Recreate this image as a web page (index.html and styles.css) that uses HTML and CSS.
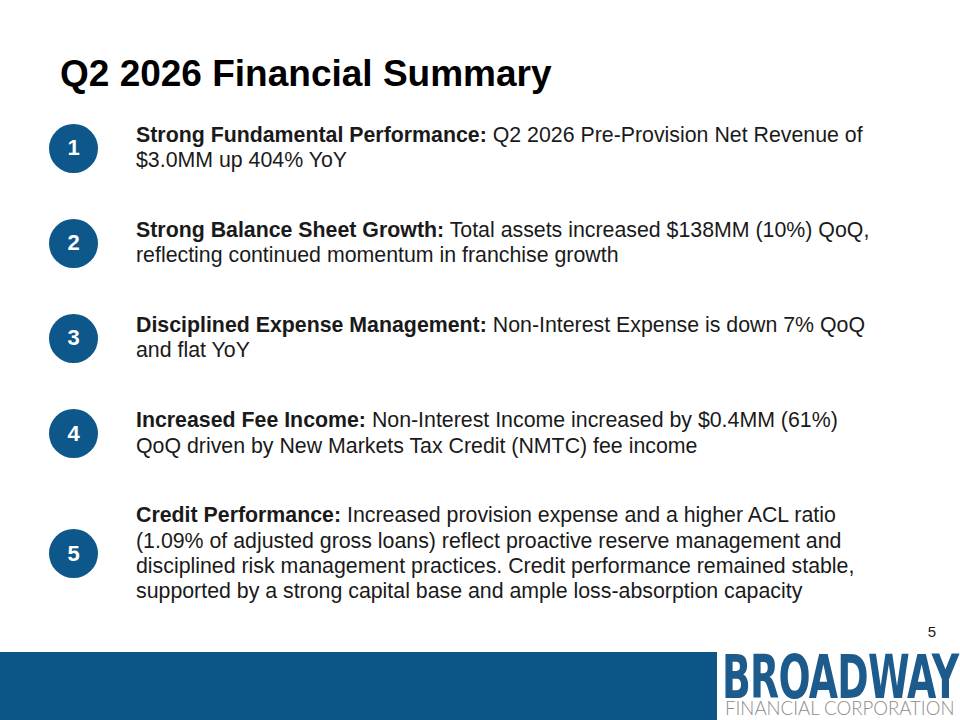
FILE: index.html
```html
<!DOCTYPE html>
<html lang="en">
<head>
<meta charset="utf-8">
<title>Q2 2026 Financial Summary</title>
<link rel="stylesheet" href="styles.css">
</head>
<body>
<div class="slide">
  <main class="content">
    <h1 class="title">Q2 2026 Financial Summary</h1>
    <ol class="items">
      <li class="item">
        <span class="num">1</span>
        <p class="text"><b>Strong Fundamental Performance:</b> Q2 2026 Pre-Provision Net Revenue of<br>$3.0MM up 404% YoY</p>
      </li>
      <li class="item">
        <span class="num">2</span>
        <p class="text"><b>Strong Balance Sheet Growth:</b> Total assets increased $138MM (10%) QoQ,<br>reflecting continued momentum in franchise growth</p>
      </li>
      <li class="item">
        <span class="num">3</span>
        <p class="text"><b>Disciplined Expense Management:</b> Non-Interest Expense is down 7% QoQ<br>and flat YoY</p>
      </li>
      <li class="item">
        <span class="num">4</span>
        <p class="text"><b>Increased Fee Income:</b> Non-Interest Income increased by $0.4MM (61%)<br>QoQ driven by New Markets Tax Credit (NMTC) fee income</p>
      </li>
      <li class="item">
        <span class="num">5</span>
        <p class="text"><b>Credit Performance:</b> Increased provision expense and a higher ACL ratio<br>(1.09% of adjusted gross loans) reflect proactive reserve management and<br>disciplined risk management practices. Credit performance remained stable,<br>supported by a strong capital base and ample loss-absorption capacity</p>
      </li>
    </ol>
  </main>
  <div class="pagenum">5</div>
  <footer class="footer">
    <div class="bar"></div>
    <div class="logo">
      <div class="logo-main"><span class="logo-word">BROADWAY</span></div>
      <div class="logo-sub">FINANCIAL CORPORATION</div>
    </div>
  </footer>
</div>
</body>
</html>
```
FILE: styles.css
```css
html, body {
  margin: 0;
  padding: 0;
  background: #ffffff;
}
.slide {
  width: 960px;
  height: 720px;
  display: flex;
  flex-direction: column;
  overflow: hidden;
  font-family: "Liberation Sans", Arial, sans-serif;
  color: #1a1a1a;
}
.content {
  flex: 1;
  padding: 53px 0 0 60px;
}
.title {
  margin: 0;
  font-size: 37px;
  line-height: 42px;
  font-weight: bold;
  color: #000000;
}
.items {
  list-style: none;
  margin: 28px 0 0 0;
  padding: 0;
  display: flex;
  flex-direction: column;
  gap: 44.5px;
}
.item {
  display: flex;
  align-items: center;
}
.num {
  flex: none;
  width: 49px;
  height: 49px;
  border-radius: 50%;
  background: #0d578a;
  color: #ffffff;
  font-weight: bold;
  font-size: 22px;
  display: flex;
  align-items: center;
  justify-content: center;
  margin-left: -11px;
}
.text {
  margin: 0 0 0 38px;
  font-size: 21.33px;
  line-height: 25.3px;
}
.text b {
  font-weight: bold;
}
.pagenum {
  height: 30px;
  padding-right: 24px;
  text-align: right;
  font-size: 15px;
  line-height: 20px;
  color: #1a1a1a;
}
.footer {
  display: flex;
  height: 68px;
}
.bar {
  flex: 1;
  background: #0b5687;
}
.logo {
  width: 238px;
  background: #ffffff;
  display: flex;
  flex-direction: column;
  padding-left: 5px;
}
.logo-main {
  height: 48px;
}
.logo-word {
  display: block;
  height: 48px;
  font-family: "DejaVu Sans Condensed", "DejaVu Sans", sans-serif;
  font-weight: bold;
  font-size: 60px;
  line-height: 50.6px;
  color: #1d5b8c;
  transform: scaleX(0.7);
  transform-origin: left center;
  letter-spacing: -1px;
  white-space: nowrap;
}
.logo-sub {
  font-family: Lato, "Liberation Sans", sans-serif;
  font-weight: 300;
  font-size: 18.6px;
  line-height: 17px;
  color: #8c8c8c;
  white-space: nowrap;
  padding-left: 3px;
}
```
